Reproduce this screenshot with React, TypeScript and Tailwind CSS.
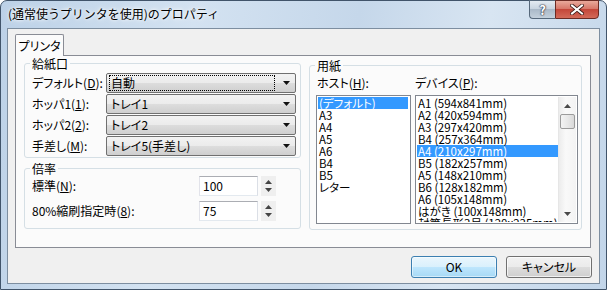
import React from 'react';

const jp = "font-['Noto_Sans_CJK_JP','Noto_Sans',sans-serif] [font-feature-settings:'palt']";

const hostItems = ['(デフォルト)', 'A3', 'A4', 'A5', 'A6', 'B4', 'B5', 'レター'];
const deviceItems = [
  'A1 (594x841mm)',
  'A2 (420x594mm)',
  'A3 (297x420mm)',
  'B4 (257x364mm)',
  'A4 (210x297mm)',
  'B5 (182x257mm)',
  'A5 (148x210mm)',
  'B6 (128x182mm)',
  'A6 (105x148mm)',
  'はがき (100x148mm)',
  '封筒長形3号 (120x235mm)',
];

function Label({ text, k, tail = '):' }: { text: string; k: string; tail?: string }) {
  return (
    <span className="whitespace-nowrap">
      {text}(<span className="underline underline-offset-[1px]">{k}</span>
      {tail}
    </span>
  );
}

function Combo({ value, focused }: { value: string; focused?: boolean }) {
  return (
    <div className="flex h-[20px] w-[190px] items-center rounded-[2px] border border-[#707070] bg-[linear-gradient(to_bottom,#f2f2f2_0%,#ebebeb_50%,#dddddd_50%,#cfcfcf_100%)] pl-[2px] pr-[5px]">
      <div
        className={`flex h-[16px] flex-1 items-center pl-[1px] leading-none ${
          focused ? 'border border-dotted border-black' : 'border border-transparent'
        }`}
      >
        {value}
      </div>
      <svg width="7" height="4" className="ml-[8px]">
        <path d="M0 0h7L3.5 4z" fill="#111" />
      </svg>
    </div>
  );
}

function Spin({ value }: { value: string }) {
  return (
    <div className="flex items-center gap-[3px]">
      <div className="h-[20px] w-[59px] border border-[#abadb3] border-b-[#e3e9ef] border-l-[#e2e3ea] border-r-[#dbdfe6] bg-white pl-[3px] leading-[18px]">
        {value}
      </div>
      <div className="flex h-[20px] w-[15px] flex-col items-center justify-between bg-[#efefef] py-[4px]">
        <svg width="7" height="4">
          <path d="M3.5 0L7 4H0z" fill="#444" />
        </svg>
        <svg width="7" height="4">
          <path d="M0 0h7L3.5 4z" fill="#444" />
        </svg>
      </div>
    </div>
  );
}

function Group({
  title,
  className,
  legendClass,
  children,
}: {
  title: string;
  className: string;
  legendClass: string;
  children: React.ReactNode;
}) {
  return (
    <fieldset className={`rounded-[3px] border border-[#d5dfe5] ${className}`}>
      <legend className={`px-[2px] text-[12px] leading-[13px] ${legendClass}`}>{title}</legend>
      {children}
    </fieldset>
  );
}

function Scrollbar() {
  return (
    <div className="flex w-[18px] flex-col border-l border-[#e6e6e6] bg-[linear-gradient(to_right,#ececec,#f9f9f9_40%,#f3f3f3)]">
      <div className="flex h-[17px] items-center justify-center">
        <svg width="7" height="4">
          <path d="M3.5 0L7 4H0z" fill="#4a4a4a" />
        </svg>
      </div>
      <div className="mx-[1px] h-[15px] rounded-[2px] border border-[#9b9b9b] bg-[linear-gradient(to_right,#f3f3f3,#e8e8e8_50%,#d9d9d9)]" />
      <div className="flex-1" />
      <div className="flex h-[17px] items-center justify-center">
        <svg width="7" height="4">
          <path d="M0 0h7L3.5 4z" fill="#4a4a4a" />
        </svg>
      </div>
    </div>
  );
}

export default function App() {
  return (
    <div className={`h-[290px] w-[607px] overflow-hidden bg-white text-[12px] text-black ${jp}`}>
      <div className="flex h-[290px] w-[607px] flex-col rounded-t-[7px] border border-[#41546a] bg-[linear-gradient(100deg,#bcd1e7_0%,#d3e2f1_30%,#c5d7ea_55%,#d8e5f2_75%,#c2d5e9_100%)]">
        {/* title bar */}
        <div className="flex h-[27px] shrink-0 items-start justify-between">
          <span className="ml-[7px] mt-[6px] font-['Noto_Sans_CJK_JP',sans-serif] text-[12px] leading-[14px] [font-feature-settings:normal] [text-shadow:0_0_6px_#ffffff,0_0_3px_#ffffff]">
            (通常使うプリンタを使用)のプロパティ
          </span>
          <div className="-mt-px mr-[7px] flex h-[19px]">
            <div className="flex w-[26px] items-center justify-center rounded-bl-[4px] border border-r-0 border-[#56687b] bg-[linear-gradient(to_bottom,#e4ebf2_0%,#c9d5e1_45%,#aab9c8_50%,#c3d0dc_100%)] text-[13px] font-bold leading-none text-white [font-feature-settings:normal] [text-shadow:0_0_1px_#334,0_0_1px_#334,0_0_2px_#334]">
              ?
            </div>
            <div className="flex w-[44px] items-center justify-center rounded-br-[4px] border border-[#6b2b24] bg-[linear-gradient(to_bottom,#e9a99b_0%,#d7786a_45%,#c4473a_50%,#d36a59_100%)]">
              <svg width="14" height="11" viewBox="0 0 14 11">
                <path d="M2 1.5L12 9.5M12 1.5L2 9.5" stroke="#3a1a16" strokeWidth="3.6" strokeLinecap="square" />
                <path d="M2 1.5L12 9.5M12 1.5L2 9.5" stroke="#ffffff" strokeWidth="2" strokeLinecap="square" />
              </svg>
            </div>
          </div>
        </div>

        {/* client area */}
        <div className="mx-[6px] mb-[5px] flex flex-1 flex-col border border-[#7d8ea0] bg-[#f0f0f0] pl-[7px] pt-[5px]">
          <div className="relative z-10 -mb-px flex h-[22px] w-[49px] items-start justify-center whitespace-nowrap rounded-t-[2px] border border-b-0 border-[#898c95] bg-[#fbfbfb] pt-[4px] leading-[13px]">
            プリンタ
          </div>
          <div className="flex h-[193px] w-[576px] items-start gap-[8px] border border-[#898c95] bg-[#fbfbfb] pl-[8px] pt-[1px]">
            <div className="flex w-[277px] flex-col gap-[4px]">
              <Group
                title="給紙口"
                legendClass="-ml-[2px]"
                className="flex flex-col gap-[1px] pb-[1px] pl-[7px] pr-[4px] pt-[3px]"
              >
                {[
                  { l: <Label text="デフォルト" k="D" />, v: '自動', f: true },
                  { l: <Label text="ホッパ1" k="1" />, v: 'トレイ1' },
                  { l: <Label text="ホッパ2" k="2" />, v: 'トレイ2' },
                  { l: <Label text="手差し" k="M" />, v: 'トレイ5(手差し)' },
                ].map((r, i) => (
                  <div key={i} className="flex h-[20px] items-center justify-between">
                    {r.l}
                    <Combo value={r.v} focused={r.f} />
                  </div>
                ))}
              </Group>
              <Group
                title="倍率"
                legendClass="-ml-[2px]"
                className="flex flex-col gap-[5px] pb-[7px] pl-[7px] pr-[24px] pt-[1px]"
              >
                <div className="flex h-[20px] items-center justify-between">
                  <Label text="標準" k="N" />
                  <Spin value="100" />
                </div>
                <div className="flex h-[20px] items-center justify-between">
                  <Label text="80%縮刷指定時" k="8" />
                  <Spin value="75" />
                </div>
              </Group>
            </div>

            <Group
              title="用紙"
              legendClass="-ml-[1px]"
              className="mt-[2px] flex w-[273px] gap-[4px] pb-[5px] pl-[6px] pt-[4px]"
            >
              <div className="flex w-[95px] flex-col">
                <div className="h-[13px] pl-[1px] leading-[13px]">
                  <Label text="ホスト" k="H" />
                </div>
                <div className="mt-[6px] h-[129px] border border-[#828790] bg-white p-px text-[11.5px]">
                  {hostItems.map((h, i) => (
                    <div
                      key={h}
                      className={`h-[12px] whitespace-nowrap pl-[1px] leading-[12px] ${
                        i === 0 ? 'mr-[1px] bg-[#3399ff] text-white' : ''
                      }`}
                    >
                      {h}
                    </div>
                  ))}
                </div>
              </div>
              <div className="flex w-[163px] flex-col">
                <div className="h-[13px] leading-[13px]">
                  <Label text="デバイス" k="P" />
                </div>
                <div className="mt-[6px] flex h-[129px] border border-[#828790] bg-white p-px text-[11.5px]">
                  <div className="flex-1 overflow-hidden">
                    {deviceItems.map((d, i) => (
                      <div
                        key={d}
                        className={`h-[12px] whitespace-nowrap pl-[1px] leading-[12px] ${
                          i === 4 ? 'bg-[#3399ff] text-white' : ''
                        }`}
                      >
                        {d}
                      </div>
                    ))}
                  </div>
                  <Scrollbar />
                </div>
              </div>
            </Group>
          </div>

          {/* buttons */}
          <div className="flex justify-end gap-[9px] pr-[7px] pt-[8px]">
            <button className="h-[22px] w-[86px] rounded-[3px] border border-[#3c7fb1] bg-[linear-gradient(to_bottom,#eaf6fd_0%,#d9f0fc_50%,#bee6fd_50%,#a7d9f5_100%)] leading-none shadow-[inset_0_0_0_1px_#ffffff80]">
              OK
            </button>
            <button className="h-[22px] w-[86px] rounded-[3px] border border-[#707070] bg-[linear-gradient(to_bottom,#f2f2f2_0%,#ebebeb_50%,#dddddd_50%,#cfcfcf_100%)] leading-none shadow-[inset_0_0_0_1px_#ffffffb0]">
              キャンセル
            </button>
          </div>
        </div>
      </div>
    </div>
  );
}
